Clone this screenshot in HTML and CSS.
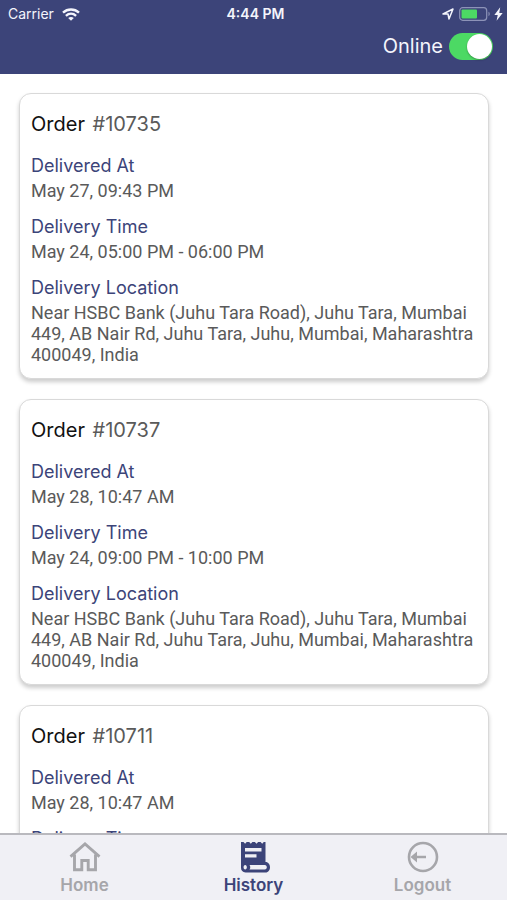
FILE: index.html
```html
<!DOCTYPE html>
<html lang="en">
<head>
<meta charset="utf-8">
<meta name="viewport" content="width=device-width, initial-scale=1">
<title>Order history</title>
<link rel="stylesheet" href="styles.css">
</head>
<body>
<header class="header">
  <div class="status">
    <div class="status-left">
      <span>Carrier</span>
      <svg class="wifi" viewBox="0 0 18 13" aria-hidden="true">
        <path d="M1 4.600C5.600.4 12.400.4 17 4.600M3.900 7.800c3-2.700 7.200-2.700 10.200 0" fill="none" stroke="currentColor" stroke-width="2.400"/>
        <path d="M9 12.800 6.200 10c1.700-1.500 3.900-1.500 5.600 0z" fill="currentColor"/>
      </svg>
    </div>
    <span class="clock">4:44 PM</span>
    <div class="status-right">
      <svg class="location" viewBox="0 0 12 12" aria-hidden="true">
        <path d="M1 6 11 1 7 11 6 6z" fill="none" stroke="currentColor" stroke-width="1.500" stroke-linejoin="round"/>
      </svg>
      <svg class="battery" viewBox="0 0 32 14" aria-hidden="true">
        <rect x=".7" y=".7" width="27" height="12.600" rx="3" fill="none" stroke="#8d93b8" stroke-width="1.200"/>
        <rect x="2.500" y="2.500" width="15.500" height="9" rx="1" fill="#4cd964"/>
        <path d="M29.500 4.800c1.600.6 1.600 3.800 0 4.400z" fill="#8d93b8"/>
      </svg>
      <svg class="bolt" viewBox="0 0 8 12" aria-hidden="true">
        <path d="M5.500 0 .3 6.800h3L2.300 12l5.400-7h-3z" fill="currentColor"/>
      </svg>
    </div>
  </div>
  <div class="availability">
    <label for="online">Online</label>
    <input class="switch" id="online" type="checkbox" role="switch" checked>
  </div>
</header>

<main class="orders">
  <article class="card">
    <h2 class="title">Order <span class="number">#10735</span></h2>
    <dl class="details">
      <dt>Delivered At</dt>
      <dd>May 27, 09:43 PM</dd>
      <dt>Delivery Time</dt>
      <dd>May 24, 05:00 PM - 06:00 PM</dd>
      <dt>Delivery Location</dt>
      <dd>Near HSBC Bank (Juhu Tara Road), Juhu Tara, Mumbai 449, AB Nair Rd, Juhu Tara, Juhu, Mumbai, Maharashtra 400049, India</dd>
    </dl>
  </article>
  <article class="card">
    <h2 class="title">Order <span class="number">#10737</span></h2>
    <dl class="details">
      <dt>Delivered At</dt>
      <dd>May 28, 10:47 AM</dd>
      <dt>Delivery Time</dt>
      <dd>May 24, 09:00 PM - 10:00 PM</dd>
      <dt>Delivery Location</dt>
      <dd>Near HSBC Bank (Juhu Tara Road), Juhu Tara, Mumbai 449, AB Nair Rd, Juhu Tara, Juhu, Mumbai, Maharashtra 400049, India</dd>
    </dl>
  </article>
  <article class="card">
    <h2 class="title">Order <span class="number">#10711</span></h2>
    <dl class="details">
      <dt>Delivered At</dt>
      <dd>May 28, 10:47 AM</dd>
      <dt>Delivery Time</dt>
    </dl>
  </article>
</main>

<nav class="tabs">
  <a class="tab" href="#home">
    <svg class="tab-icon" viewBox="0 0 32 32" aria-hidden="true">
      <path d="M1.500 15.600 16 3l14.500 12.600M5.500 13.500v15.300h7.300V19.500h6.400v9.300h7.300V13.500" fill="none" stroke="currentColor" stroke-width="2.900"/>
    </svg>
    <span>Home</span>
  </a>
  <a class="tab active" href="#history" aria-current="page">
    <svg class="tab-icon" viewBox="0 0 32 32" aria-hidden="true">
      <path fill="currentColor" fill-rule="evenodd" d="M3 1h2.500l1.600 1.700L8.700 1h2.500l1.600 1.700L14.400 1h2.500l1.600 1.700L20.100 1h2.500l1.600 1.700L25.800 1h1.700v20c6 0 6 10.500 0 10.500h-20c-2.800 0-4.500-2-4.500-4.700zM7 7v3.400h16.500V7zM7 13.300v3.200h11.500v-3.200zM11.500 24c1 1.300 1 3.200 0 4.500h15.300c2.700 0 2.700-4.500 0-4.500zM7.200 24c-2.200 0-2.200 4.500 0 4.500s2.200-4.500 0-4.500z"/>
    </svg>
    <span>History</span>
  </a>
  <a class="tab" href="#logout">
    <svg class="tab-icon" viewBox="0 0 32 32" aria-hidden="true">
      <circle cx="16" cy="16" r="14" fill="none" stroke="currentColor" stroke-width="2.600"/>
      <path d="M3.500 16 10 10.500v4.200h9v2.600h-9v4.200z" fill="currentColor"/>
    </svg>
    <span>Logout</span>
  </a>
</nav>
</body>
</html>
```

FILE: styles.css
```css
* {
  box-sizing: border-box;
}

body {
  margin: 0;
  height: 100vh;
  display: flex;
  flex-direction: column;
  background: #fff;
  color: #5a5a5a;
  font-family: Inter, "Liberation Sans", sans-serif;
  font-size: 17px;
  line-height: 21px;
}

.header {
  flex: none;
  padding: 4px 8px 14px;
  background: #3c4479;
  color: #f4f5fc;
}

.status {
  display: grid;
  grid-template-columns: 1fr auto 1fr;
  align-items: center;
  font-size: 14px;
  line-height: 20px;
}

.status-left,
.status-right {
  display: flex;
  align-items: center;
  gap: 8px;
}

.status-right {
  justify-content: flex-end;
  gap: 5px;
  margin-right: -4px;
}

.clock {
  font-weight: 600;
  padding-left: 4px;
}

.wifi {
  width: 18px;
  height: 13px;
}

.location {
  width: 12px;
  height: 12px;
}

.battery {
  width: 32px;
  height: 14px;
}

.bolt {
  width: 9px;
  height: 14px;
  margin-left: -2px;
}

.availability {
  display: flex;
  justify-content: flex-end;
  align-items: center;
  gap: 6px;
  margin-top: 8px;
  padding-right: 6px;
  font-size: 20px;
  line-height: 28px;
}

.switch {
  appearance: none;
  display: flex;
  width: 44px;
  height: 27px;
  margin: 0;
  padding: 1px;
  border-radius: 14px;
  background: #8d93b8;
}

.switch::before {
  content: "";
  width: 25px;
  height: 25px;
  border-radius: 50%;
  background: #fff;
  box-shadow: 0 1px 2px rgba(0, 0, 0, 0.3);
}

.switch:checked {
  justify-content: flex-end;
  background: #4cd964;
}

.orders {
  flex: 1;
  min-height: 0;
  overflow-y: auto;
  scrollbar-width: none;
  padding: 19px 18px 20px 19px;
  display: flex;
  flex-direction: column;
  gap: 20px;
}

.card {
  flex: none;
  padding: 16px 11px 13px;
  border: 1px solid #d9d9d9;
  border-radius: 12px;
  background: #fff;
  box-shadow: 0 3px 4px rgba(0, 0, 0, 0.2);
}

.title {
  margin: 0 0 16px;
  color: #111;
  font-size: 20px;
  font-weight: 400;
  line-height: 28px;
}

.number {
  margin-left: 2px;
  color: #5a5a5a;
}

.details {
  margin: 0;
}

.details dt {
  color: #3c4479;
  font-size: 18px;
  line-height: 24px;
}

.details dd {
  margin: 2px 0 14px;
  font-family: Roboto, "Liberation Sans", sans-serif;
  font-size: 18px;
}

.details dd:last-child {
  margin-bottom: 0;
}

.tabs {
  flex: none;
  display: grid;
  grid-template-columns: repeat(3, 1fr);
  border-top: 2px solid #b9b9be;
  background: #f0f0f5;
}

.tab {
  display: flex;
  flex-direction: column;
  align-items: center;
  padding: 6px 0 4px;
  gap: 2px;
  color: #a6a6aa;
  font-weight: 600;
  text-decoration: none;
}

.tab.active {
  color: #3c4479;
}

.tab-icon {
  width: 32px;
  height: 32px;
}
```
